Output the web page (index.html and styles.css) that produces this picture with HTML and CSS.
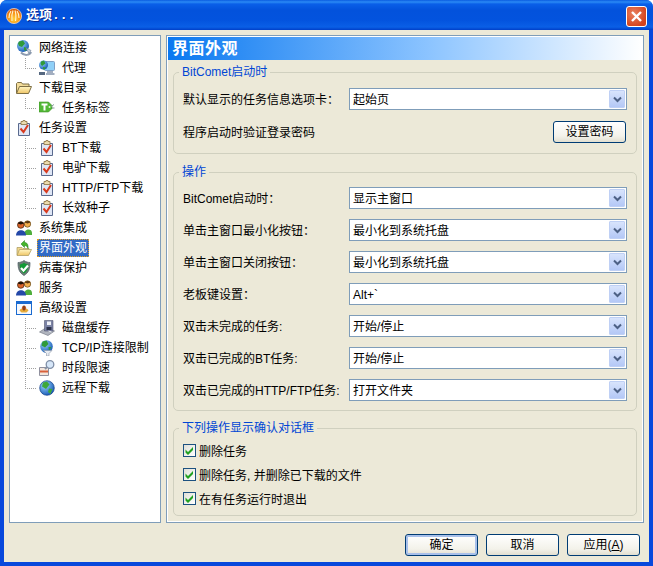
FILE: index.html
```html
<!DOCTYPE html>
<html lang="zh">
<head>
<meta charset="utf-8">
<title>选项...</title>
<link rel="stylesheet" href="styles.css">
</head>
<body>
<svg class="defs" width="0" height="0" aria-hidden="true">
  <defs>
    <linearGradient id="fold" x1="0" y1="0" x2="0" y2="1"><stop offset="0" stop-color="#fff6c4"/><stop offset="1" stop-color="#efc566"/></linearGradient>
    <radialGradient id="globe" cx=".35" cy=".3" r=".8"><stop offset="0" stop-color="#9fd8ff"/><stop offset="1" stop-color="#0b4fb0"/></radialGradient>
    <radialGradient id="ball" cx=".5" cy=".7" r=".75"><stop offset="0" stop-color="#ffd23a"/><stop offset=".6" stop-color="#f78a12"/><stop offset="1" stop-color="#c8400c"/></radialGradient>
    <symbol id="i-net" viewBox="0 0 16 16"><circle cx="7" cy="6" r="6" fill="url(#globe)"/><path d="M3 1.500l4-1 2 3-3 3.500-3-1-1-2.500zM8 7l3 1-1 3-2-1z" fill="#2f9a3a"/><path d="M5 12.500c3 3.500 9 3 10-.5" fill="none" stroke="#8e9cb0" stroke-width="2"/><path d="M10 8l5 2.500-2 3z" fill="#c2cedc" stroke="#6a7a90" stroke-width=".6"/></symbol>
    <symbol id="i-proxy" viewBox="0 0 16 16"><rect x="5.500" y="1.500" width="10" height="9" rx="1" fill="#8fd0f8" stroke="#7f9fc5"/><path d="M8 11h6v2h1.500v2H7v-2h1z" fill="#a2aec0"/><circle cx="4.500" cy="5" r="4.500" fill="url(#globe)"/><path d="M2 1.500l3-1 1.500 3-3.500 2.500-1.500-2zM4 7l3 .5-2 2.500-1-1z" fill="#2f9a3a"/><path d="M0 12h6v3H0z" fill="#566880"/></symbol>
    <symbol id="i-folder" viewBox="0 0 16 16"><path d="M.5 13V3.500L1.500 2.500h4l1 1.500H13v2.500" fill="#f3dc9a" stroke="#7d6f45"/><path d="M3.500 6.500H15.500L12.500 13.500H.5z" fill="url(#fold)" stroke="#7d6f45"/></symbol>
    <symbol id="i-tag" viewBox="0 0 16 16"><path d="M0 2h9.500L13 5.500v3L9.500 12H0z" fill="#52b836" stroke="#3f9028" stroke-width=".6"/><path d="M2.500 3.500h6v2H6.500v5h-2v-5h-2z" fill="#fff"/><circle cx="10.500" cy="7" r="1" fill="#dff5d5"/><path d="M12 6.500l3-2M13 8h2.500" stroke="#8a9aa0"/></symbol>
    <symbol id="i-check" viewBox="0 0 16 16"><path d="M2.500 3.500h11v12h-11z" fill="#dfe6f5" stroke="#5a6a8e"/><path d="M5 1.500h2V.5h2v1h2v3H5z" fill="#ecdcae" stroke="#8a7040" stroke-width=".8"/><path d="M4.500 8.500l3 3.500 4.500-7" fill="none" stroke="#d83c20" stroke-width="2"/></symbol>
    <symbol id="i-people" viewBox="0 0 16 16"><circle cx="11.500" cy="4" r="3.200" fill="#f2ae4c" stroke="#6a4a18" stroke-width=".7"/><path d="M8.500 2.500c2-2 5-2 6 0l-3 1z" fill="#5a3a12"/><path d="M8 14.500c0-6 8-6.500 8-1.500v2H8z" fill="#4fae3c"/><circle cx="4.800" cy="5" r="3.300" fill="#d8642a" stroke="#3a1c08" stroke-width=".7"/><path d="M1.800 3.500c1.500-2.500 5-2.500 6 0l-3 1z" fill="#1d1208"/><path d="M0 15.500c0-7 10-7 10 0z" fill="#2448a8"/></symbol>
    <symbol id="i-look" viewBox="0 0 16 16"><path d="M1 15V7.500h5l1 1h6V11" fill="#f0d68c" stroke="#a8965a" stroke-width=".7"/><path d="M3.500 9.500H15.500L12.500 15.500H1z" fill="url(#fold)" stroke="#a8965a" stroke-width=".7"/><path d="M8.500 .5L5 4l3.500 3.500V5.500c1.500 0 3 1 3.500 3 .5-4-1-6-3.500-6z" fill="#45b52a" stroke="#1f7a1a" stroke-width=".5"/></symbol>
    <symbol id="i-shield" viewBox="0 0 16 16"><path d="M8 .5c2 1.500 4 2 6 2 0 6-1 10-6 13-5-3-6-7-6-13 2 0 4-.5 6-2z" fill="#6c7c74" stroke="#55646c" stroke-width=".8"/><path d="M8 2.800c1.500 1 3 1.500 4.200 1.600 0 4-1 7-4.200 9.200-3.200-2.200-4.200-5.200-4.200-9.200C5 4.300 6.500 3.800 8 2.800z" fill="#129a36"/><path d="M5 8l2.500 2.700L12 5.500" fill="none" stroke="#fff" stroke-width="2.200"/></symbol>
    <symbol id="i-adv" viewBox="0 0 16 16"><rect x=".5" y="1.500" width="15" height="13" fill="#f6f8fc" stroke="#1a6ad0"/><path d="M1 2h14v2H1z" fill="#1a6ad0"/><path d="M3.500 10.500c1-3 8-3 9 0l-2 2h-5z" fill="#e8ac3a"/><circle cx="8" cy="8" r="2.200" fill="#c05a24"/><path d="M8 5.500v5" stroke="#5a2a10"/></symbol>
    <symbol id="i-disk" viewBox="0 0 16 16"><path d="M.5 12l6-4 9 3-6.500 4.500z" fill="#b0b4be" stroke="#6a6e7a" stroke-width=".6"/><path d="M5.500 .5h8.500v10.500H5.500z" fill="#7c84a6" stroke="#50566e" stroke-width=".6"/><path d="M8 1.500h4v3.500H8z" fill="#f0f2f8"/><path d="M7.500 7h5v3h-5z" fill="#2e344c"/><path d="M9.500 11l3 1" stroke="#e8ecf2"/></symbol>
    <symbol id="i-tcp" viewBox="0 0 16 16"><circle cx="7.500" cy="6.500" r="6.300" fill="url(#globe)"/><path d="M3.500 1.500l4-1 2 3.500-3.500 3.500-3.500-2zM9.500 7l3 0-2.500 4z" fill="#2f9a3a"/><path d="M4.500 10.500h8.500l-3 3V16H7.500v-2.500z" fill="#e8ecf2" stroke="#8a94a4" stroke-width=".6"/></symbol>
    <symbol id="i-time" viewBox="0 0 16 16"><path d="M.5 7.500h9v8h-9z" fill="#f3e6dc" stroke="#90909e"/><path d="M1 10.500h8v2H1z" fill="#d8603a"/><path d="M6 9l3-3" stroke="#8a94a4" stroke-width="2"/><circle cx="11" cy="4.500" r="3.800" fill="#d6e6f8" stroke="#7f8ea6" stroke-width="1.300"/></symbol>
    <symbol id="i-remote" viewBox="0 0 16 16"><circle cx="8" cy="8" r="7.300" fill="url(#globe)" stroke="#14408a" stroke-width=".7"/><path d="M4 2.500l4-1 2.500 3-3.500 4.500-4-2.500zM10 8.500l3.500.5-2 5-2.500-2z" fill="#3fa83a"/></symbol>
    <symbol id="i-down" viewBox="0 0 9 7"><path d="M1 1.500l3.500 3.500L8 1.500" fill="none" stroke="#4d6185" stroke-width="2"/></symbol>
    <symbol id="i-tick" viewBox="0 0 11 11"><path d="M1.500 4.500l2.500 2.500 5-5v3L4 10 1.500 7.500z" fill="#21a121"/></symbol>
  </defs>
</svg>

<main class="window">
  <header class="titlebar">
    <svg class="app-icon" viewBox="0 0 16 16" width="16" height="16"><circle cx="8" cy="8" r="7.600" fill="url(#ball)" stroke="#fbe4c8" stroke-width=".7"/><path d="M3 10c0-3 .5-5 2-7M6 13c-.5-4 0-8 1-10.500M9.500 13c.5-4 .5-8-.5-10.500M13 10c0-3-.5-5-2-7" fill="none" stroke="#fff4d0" stroke-width="1.100"/></svg>
    <h1 class="title">选项...</h1>
    <button class="close" aria-label="关闭"><svg viewBox="0 0 13 13" width="13" height="13"><path d="M2 2l9 9M11 2l-9 9" stroke="#fff" stroke-width="2.400"/></svg></button>
  </header>

  <div class="client">
    <div class="panes">
      <nav class="tree">
        <div class="node"><svg class="ico"><use href="#i-net"/></svg><span class="lbl">网络连接</span></div>
        <div class="node child last"><i class="conn"></i><svg class="ico"><use href="#i-proxy"/></svg><span class="lbl">代理</span></div>
        <div class="node"><svg class="ico"><use href="#i-folder"/></svg><span class="lbl">下载目录</span></div>
        <div class="node child last"><i class="conn"></i><svg class="ico"><use href="#i-tag"/></svg><span class="lbl">任务标签</span></div>
        <div class="node"><svg class="ico"><use href="#i-check"/></svg><span class="lbl">任务设置</span></div>
        <div class="node child"><i class="conn"></i><svg class="ico"><use href="#i-check"/></svg><span class="lbl">BT下载</span></div>
        <div class="node child"><i class="conn"></i><svg class="ico"><use href="#i-check"/></svg><span class="lbl">电驴下载</span></div>
        <div class="node child"><i class="conn"></i><svg class="ico"><use href="#i-check"/></svg><span class="lbl">HTTP/FTP下载</span></div>
        <div class="node child last"><i class="conn"></i><svg class="ico"><use href="#i-check"/></svg><span class="lbl">长效种子</span></div>
        <div class="node"><svg class="ico"><use href="#i-people"/></svg><span class="lbl">系统集成</span></div>
        <div class="node"><svg class="ico"><use href="#i-look"/></svg><span class="lbl selected">界面外观</span></div>
        <div class="node"><svg class="ico"><use href="#i-shield"/></svg><span class="lbl">病毒保护</span></div>
        <div class="node"><svg class="ico"><use href="#i-people"/></svg><span class="lbl">服务</span></div>
        <div class="node"><svg class="ico"><use href="#i-adv"/></svg><span class="lbl">高级设置</span></div>
        <div class="node child"><i class="conn"></i><svg class="ico"><use href="#i-disk"/></svg><span class="lbl">磁盘缓存</span></div>
        <div class="node child"><i class="conn"></i><svg class="ico"><use href="#i-tcp"/></svg><span class="lbl">TCP/IP连接限制</span></div>
        <div class="node child"><i class="conn"></i><svg class="ico"><use href="#i-time"/></svg><span class="lbl">时段限速</span></div>
        <div class="node child last"><i class="conn"></i><svg class="ico"><use href="#i-remote"/></svg><span class="lbl">远程下载</span></div>
      </nav>

      <section class="page">
        <h2 class="page-head">界面外观</h2>
        <div class="page-body">
          <fieldset class="group g-start">
            <legend>BitComet启动时</legend>
            <div class="row"><span class="label">默认显示的任务信息选项卡：</span><div class="combo"><span class="val">起始页</span><span class="arrow"><svg width="9" height="7"><use href="#i-down"/></svg></span></div></div>
            <div class="row row-pw"><span class="label">程序启动时验证登录密码</span><button class="btn btn-pw">设置密码</button></div>
          </fieldset>

          <fieldset class="group g-ops">
            <legend>操作</legend>
            <div class="row"><span class="label">BitComet启动时：</span><div class="combo"><span class="val">显示主窗口</span><span class="arrow"><svg width="9" height="7"><use href="#i-down"/></svg></span></div></div>
            <div class="row"><span class="label">单击主窗口最小化按钮：</span><div class="combo"><span class="val">最小化到系统托盘</span><span class="arrow"><svg width="9" height="7"><use href="#i-down"/></svg></span></div></div>
            <div class="row"><span class="label">单击主窗口关闭按钮：</span><div class="combo"><span class="val">最小化到系统托盘</span><span class="arrow"><svg width="9" height="7"><use href="#i-down"/></svg></span></div></div>
            <div class="row"><span class="label">老板键设置：</span><div class="combo"><span class="val">Alt+`</span><span class="arrow"><svg width="9" height="7"><use href="#i-down"/></svg></span></div></div>
            <div class="row"><span class="label">双击未完成的任务:</span><div class="combo"><span class="val">开始/停止</span><span class="arrow"><svg width="9" height="7"><use href="#i-down"/></svg></span></div></div>
            <div class="row"><span class="label">双击已完成的BT任务:</span><div class="combo"><span class="val">开始/停止</span><span class="arrow"><svg width="9" height="7"><use href="#i-down"/></svg></span></div></div>
            <div class="row"><span class="label">双击已完成的HTTP/FTP任务:</span><div class="combo"><span class="val">打开文件夹</span><span class="arrow"><svg width="9" height="7"><use href="#i-down"/></svg></span></div></div>
          </fieldset>

          <fieldset class="group g-confirm">
            <legend>下列操作显示确认对话框</legend>
            <div class="chk"><span class="box"><svg width="11" height="11"><use href="#i-tick"/></svg></span><span class="chk-text">删除任务</span></div>
            <div class="chk"><span class="box"><svg width="11" height="11"><use href="#i-tick"/></svg></span><span class="chk-text">删除任务, 并删除已下载的文件</span></div>
            <div class="chk"><span class="box"><svg width="11" height="11"><use href="#i-tick"/></svg></span><span class="chk-text">在有任务运行时退出</span></div>
          </fieldset>
        </div>
      </section>
    </div>

    <footer class="actions">
      <button class="btn btn-main default">确定</button>
      <button class="btn btn-main">取消</button>
      <button class="btn btn-main">应用(<u>A</u>)</button>
    </footer>
  </div>
</main>
</body>
</html>
```

FILE: styles.css
```css
* { box-sizing: border-box; }
html, body { margin: 0; padding: 0; }
body {
  width: 653px;
  height: 566px;
  overflow: hidden;
  font: 12px/16px "Liberation Sans", "Noto Sans CJK SC", sans-serif;
  color: #000;
}
.defs { display: block; height: 0; }

.window {
  width: 653px;
  height: 566px;
  display: flex;
  flex-direction: column;
  background: #0848dc;
  border-radius: 7px 7px 0 0;
  overflow: hidden;
}
.titlebar {
  height: 30px;
  flex: none;
  display: flex;
  align-items: center;
  padding: 2px 6px 0 6px;
  background: linear-gradient(#0a5ce0 0, #2b8af5 2px, #0a5fe8 4px, #0352dc 10px, #0353de 20px, #0a5fe6 27px, #003fc8 30px);
}
.app-icon { flex: none; }
.title {
  margin: 0 0 0 4px;
  flex: 1;
  font-family: "Liberation Mono", "Noto Sans CJK SC", sans-serif;
  font-size: 13px;
  font-weight: bold;
  color: #fff;
  text-shadow: 1px 1px 0 #0a2a90;
}
.close {
  width: 21px;
  height: 21px;
  padding: 0;
  display: flex;
  align-items: center;
  justify-content: center;
  border: 1px solid #fff;
  border-radius: 3px;
  background: radial-gradient(circle at 35% 35%, #e9815f, #d4431c 75%);
}

.client {
  flex: 1;
  margin: 0 4px 4px 4px;
  display: flex;
  flex-direction: column;
  background: #ece9d8;
  padding: 5px 5px 0 5px;
  min-height: 0;
}
.panes {
  display: flex;
  gap: 5px;
  height: 488px;
}

.tree {
  width: 152px;
  flex: none;
  background: #fff;
  border: 1px solid #7f9db9;
  padding: 2px 0 0 6px;
}
.node {
  height: 20px;
  display: flex;
  align-items: center;
  white-space: nowrap;
}
.child { padding-left: 9px; }
.conn {
  flex: none;
  width: 14px;
  height: 20px;
  background:
    repeating-linear-gradient(to bottom, #a0a0a0 0 1px, transparent 1px 2px) left top / 1px 100% no-repeat,
    repeating-linear-gradient(to right, #a0a0a0 0 1px, transparent 1px 2px) left 50% / 12px 1px no-repeat;
}
.last .conn {
  background:
    repeating-linear-gradient(to bottom, #a0a0a0 0 1px, transparent 1px 2px) left top / 1px 50% no-repeat,
    repeating-linear-gradient(to right, #a0a0a0 0 1px, transparent 1px 2px) left 50% / 12px 1px no-repeat;
}
.ico { flex: none; width: 16px; height: 16px; }
.lbl {
  margin-left: 5px;
  padding: 0 2px;
  height: 18px;
  line-height: 18px;
}
.selected {
  background: #316ac5;
  color: #fff;
  outline: 1px dotted #e8a020;
  outline-offset: -1px;
}

.page {
  flex: 1;
  min-width: 0;
  border: 1px solid #7f9db9;
  padding: 1px 0 0 1px;
  background: #fff;
  display: flex;
  flex-direction: column;
}
.page-head {
  margin: 0;
  flex: none;
  height: 23px;
  padding-left: 4px;
  font-size: 16px;
  line-height: 24px;
  letter-spacing: .5px;
  font-weight: bold;
  color: #fff;
  background: linear-gradient(to right, #0a78f0 0, #8cc4ff 55%, #fff 100%);
}
.page-body {
  flex: 1;
  margin: 0 1px 1px 0;
  background: #ece9d8;
  padding: 5px 5px 0 5px;
}

.group {
  margin: 0;
  padding: 0 9px;
  border: 1px solid #d0d0bf;
  border-radius: 5px;
  min-width: 0;
}
.group legend {
  padding: 0 3px;
  margin-left: -4px;
  color: #0046d5;
  line-height: 14px;
}
.g-start { height: 89px; padding-top: 4px; }
.g-ops { height: 246px; margin-top: 11px; padding-top: 3px; }
.g-confirm { height: 95px; margin-top: 10px; padding-top: 3.5px; }

.row {
  height: 32px;
  display: flex;
  align-items: center;
  justify-content: space-between;
}
.g-start .row-pw { height: 34px; }
.label { white-space: nowrap; padding-top: 2px; }
.val { padding-top: 1px; }
.combo {
  width: 278px;
  height: 22px;
  flex: none;
  display: flex;
  align-items: center;
  justify-content: space-between;
  background: #fff;
  border: 1px solid #7f9db9;
  padding: 1px 1px 1px 3px;
}
.arrow {
  width: 16px;
  height: 18px;
  display: flex;
  align-items: center;
  justify-content: center;
  background: linear-gradient(#d8e4fc, #b4c8f6);
  border: 1px solid #bfd0f5;
  border-radius: 1px;
}

.btn {
  padding: 0;
  font: inherit;
  color: #000;
  border: 1px solid #003c74;
  border-radius: 3px;
  background: linear-gradient(#fff, #f3f2ea 70%, #e2dfd0);
}
.btn-pw { width: 73px; height: 22px; margin-right: 1px; }
.btn-main { width: 73px; height: 22px; }
.default { box-shadow: inset 0 0 0 2px #a8c0ea; }

.chk {
  height: 24px;
  display: flex;
  align-items: center;
  gap: 3px;
  white-space: nowrap;
}
.chk-text { padding-top: 2px; }
.box {
  width: 13px;
  height: 13px;
  flex: none;
  display: flex;
  align-items: center;
  justify-content: center;
  border: 1px solid #1c5180;
  background: linear-gradient(135deg, #e0e0d8, #fff);
}

.actions {
  flex: 1;
  display: flex;
  justify-content: flex-end;
  align-items: flex-start;
  gap: 8px;
  padding: 11px 4px 0 0;
}
```
